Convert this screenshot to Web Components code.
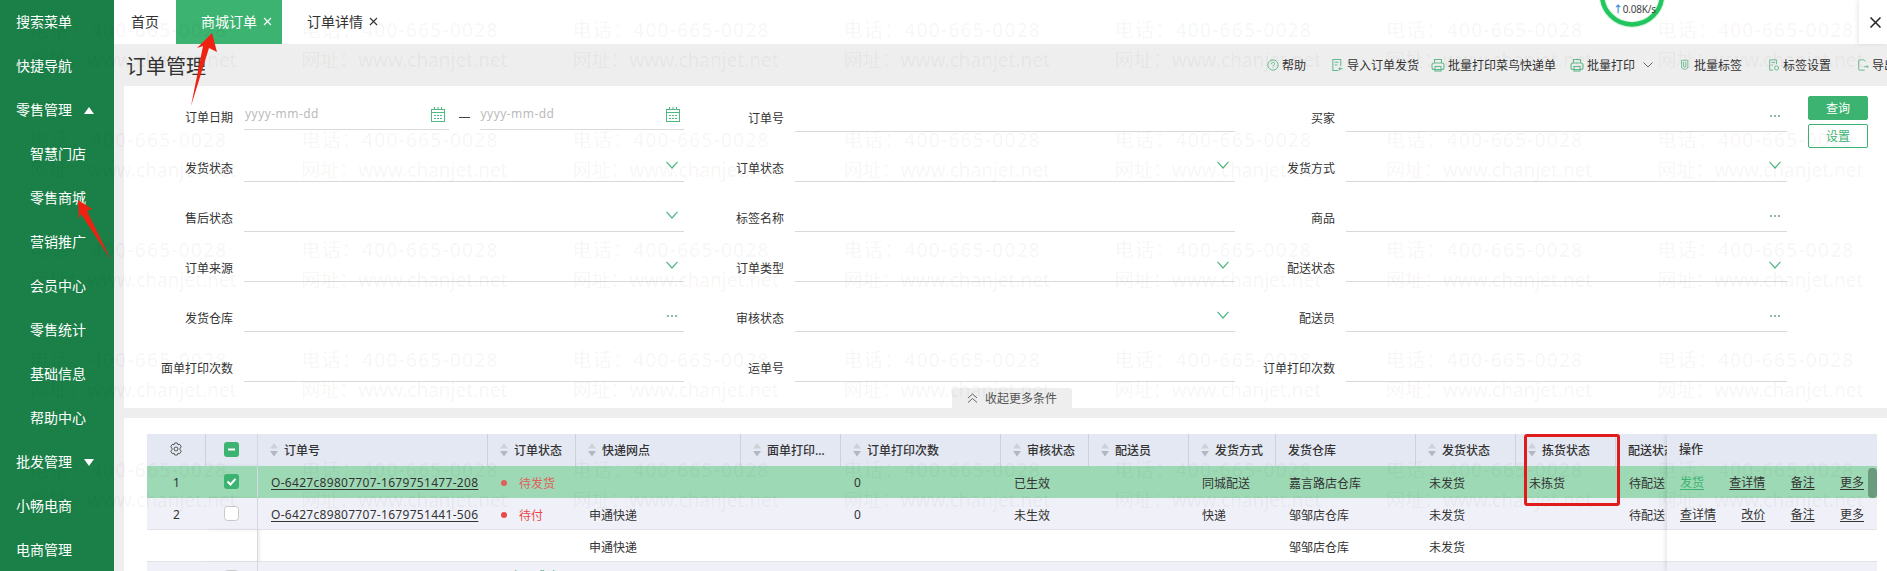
<!DOCTYPE html>
<html lang="zh">
<head>
<meta charset="utf-8">
<title>订单管理</title>
<style>
    html, body { margin: 0; padding: 0; background: #fff; overflow: hidden; }
    body { font-family: "Noto Sans", "Noto Sans CJK SC", sans-serif; font-size: 12px; color: #333; }
</style>
</head>
<body>
<app-shell>
    <app-sidebar></app-sidebar>
    <main-area></main-area>
    <water-mark></water-mark>
    <red-marks></red-marks>
</app-shell>

<script>
const FONT = '"Noto Sans", "Noto Sans CJK SC", sans-serif';

class AppShell extends HTMLElement {
    constructor() {
        super();
        this.attachShadow({ mode: "open" });
    }
    connectedCallback() {
        this.shadowRoot.innerHTML = `
            <style>
                :host {
                    display: grid;
                    grid-template-columns: 114px 1773px;
                    width: 1887px;
                    height: 571px;
                    overflow: hidden;
                    position: relative;
                    font-family: ${FONT};
                }
            </style>
            <slot></slot>
        `;
    }
}

// Menu lateral verde
class SideItem extends HTMLElement {
    constructor() {
        super();
        this.attachShadow({ mode: "open" });
    }
    connectedCallback() {
        const caret = this.getAttribute("caret");
        const tri = caret === "up"
            ? '<path d="M0 8 L5 1 L10 8 Z"/>'
            : '<path d="M0 1 L10 1 L5 8 Z"/>';
        this.shadowRoot.innerHTML = `
            <style>
                :host {
                    display: flex;
                    align-items: center;
                    height: 44px;
                    padding-left: 16px;
                    color: #fff;
                    font-size: 14px;
                    line-height: 44px;
                }
                :host([sub]) { padding-left: 30px; }
                svg { margin-left: 12px; fill: #fff; }
            </style>
            <slot></slot>
            ${caret ? `<svg width="10" height="9" viewBox="0 0 10 9">${tri}</svg>` : ""}
        `;
    }
}

class AppSidebar extends HTMLElement {
    constructor() {
        super();
        this.attachShadow({ mode: "open" });
    }
    connectedCallback() {
        this.shadowRoot.innerHTML = `
            <style>
                :host { display: block; background: #1a8048; height: 571px; overflow: hidden; }
            </style>
            <side-item>搜索菜单</side-item>
            <side-item>快捷导航</side-item>
            <side-item caret="up">零售管理</side-item>
            <side-item sub>智慧门店</side-item>
            <side-item sub>零售商城</side-item>
            <side-item sub>营销推广</side-item>
            <side-item sub>会员中心</side-item>
            <side-item sub>零售统计</side-item>
            <side-item sub>基础信息</side-item>
            <side-item sub>帮助中心</side-item>
            <side-item caret="down">批发管理</side-item>
            <side-item>小畅电商</side-item>
            <side-item>电商管理</side-item>
        `;
    }
}

// Pestanas superiores, con el anillo de velocidad y el boton de cerrar encima
class TabBar extends HTMLElement {
    constructor() {
        super();
        this.attachShadow({ mode: "open" });
    }
    connectedCallback() {
        const x = '<svg class="x" width="9" height="9" viewBox="0 0 9 9"><path d="M1 1 L8 8 M8 1 L1 8"/></svg>';
        this.shadowRoot.innerHTML = `
            <style>
                :host {
                    display: flex;
                    height: 44px;
                    position: relative;
                    background: #fff;
                    font-size: 14px;
                    color: #333;
                }
                .tab { display: flex; align-items: center; padding-left: 25px; height: 44px; box-sizing: border-box; padding-bottom: 3px; }
                .home { width: 62px; padding-left: 17px; }
                .active { width: 106px; background: #3cb371; color: #fff; }
                .x { margin-left: 6px; margin-top: 2px; stroke: currentColor; stroke-width: 1.1; fill: none; }
                .ring { position: absolute; left: 1485px; top: 0; width: 66px; height: 32px; overflow: hidden; }
                .speed { position: absolute; left: 1499px; top: 2px; font-size: 10px; line-height: 14px; color: #444; letter-spacing: -0.2px; white-space: nowrap; }
                .speed b { color: #2f8fe0; font-weight: 700; }
                .close {
                    position: absolute; right: 0; top: 0; width: 28px; height: 44px;
                    background: #fff; box-shadow: -2px 0 4px rgba(0,0,0,.08);
                    display: flex; align-items: center; justify-content: center; color: #222;
                }
                .close svg { stroke: #222; stroke-width: 1.5; fill: none; margin-left: 4px; }
            </style>
            <div class="tab home">首页</div>
            <div class="tab active">商城订单${x}</div>
            <div class="tab">订单详情${x}</div>
            <svg class="ring" viewBox="0 0 66 32">
                <circle cx="33" cy="-5.5" r="30" fill="none" stroke="#dff5e6" stroke-width="7"/>
                <circle cx="33" cy="-5.5" r="30" fill="none" stroke="#22c55e" stroke-width="4.5"/>
            </svg>
            <div class="speed"><b>↑</b>0.08K/s</div>
            <div class="close"><svg width="11" height="11" viewBox="0 0 11 11"><path d="M.5 .5 L10.5 10.5 M10.5 .5 L.5 10.5"/></svg></div>
        `;
    }
}

const TOOL_ICONS = {
    help: '<circle cx="7" cy="7" r="6"/><path d="M5.2 5.6 a1.8 1.8 0 1 1 2.6 1.6 c-.6.3-.8.7-.8 1.3"/><path d="M7 10 v.6"/>',
    imp: '<path d="M10.5 8 V1 H2 V13 H8"/><path d="M4 4 H8 M4 7 H7"/><path d="M12.5 11 H8.5 M10 9.5 L8.5 11 L10 12.5"/>',
    print: '<rect x="1" y="5" width="12" height="6.5" rx="2"/><path d="M3.5 5 V1.5 H10.5 V5"/><rect x="4" y="8.5" width="6" height="4.5"/>',
    label: '<path d="M2 1 H10 V10.5 Q6 14.5 2 10.5 Z"/><path d="M4.5 3 V9 Q6 10.5 7.5 9 V3"/>',
    set: '<path d="M10 6 V1 H2 V13 H6"/><path d="M4 4 H8 M4 7 H6"/><circle cx="10" cy="10.5" r="2.4"/>',
    exp: '<path d="M10 3 L8 1 H3 Q2 1 2 2 V12 Q2 13 3 13 H9"/><path d="M8 9 H13 M11.5 7.5 L13 9 L11.5 10.5"/>'
};

class ToolBtn extends HTMLElement {
    constructor() {
        super();
        this.attachShadow({ mode: "open" });
    }
    connectedCallback() {
        const icon = TOOL_ICONS[this.getAttribute("icon")];
        const size = this.getAttribute("size") || 14;
        const drop = this.hasAttribute("drop")
            ? '<svg class="drop" width="10" height="6" viewBox="0 0 10 6"><path d="M.5 .5 L5 5 L9.5 .5"/></svg>'
            : "";
        this.shadowRoot.innerHTML = `
            <style>
                :host { display: inline-flex; align-items: center; flex-shrink: 0; white-space: nowrap; font-size: 12px; color: #333; }
                .ic { fill: none; stroke: #62b98c; stroke-width: 1.1; margin-right: 3px; }
                .drop { fill: none; stroke: #666; stroke-width: 1; margin-left: 8px; }
            </style>
            <svg class="ic" width="${size}" height="14" viewBox="0 0 14 14" preserveAspectRatio="xMidYMid meet">${icon}</svg><slot></slot>${drop}
        `;
    }
}

class PageHead extends HTMLElement {
    constructor() {
        super();
        this.attachShadow({ mode: "open" });
    }
    connectedCallback() {
        this.shadowRoot.innerHTML = `
            <style>
                :host {
                    display: flex;
                    align-items: center;
                    height: 42px;
                    background: #eee;
                    padding-left: 12px;
                    white-space: nowrap;
                }
                h1 { margin: 0 1060px 0 0; font-size: 20px; font-weight: 400; color: #333; flex-shrink: 0; width: 81px; }
            </style>
            <h1>订单管理</h1>
            <tool-btn icon="help" size="12">帮助</tool-btn>
            <tool-btn icon="imp" size="13" style="margin-left:25px">导入订单发货</tool-btn>
            <tool-btn icon="print" style="margin-left:12px">批量打印菜鸟快递单</tool-btn>
            <tool-btn icon="print" style="margin-left:14px" drop>批量打印</tool-btn>
            <tool-btn icon="label" size="11" style="margin-left:27px">批量标签</tool-btn>
            <tool-btn icon="set" size="12" style="margin-left:26px">标签设置</tool-btn>
            <tool-btn icon="exp" size="12" style="margin-left:26px">导出</tool-btn>
        `;
    }
}

const CAL = `<svg class="cal" width="14" height="15" viewBox="0 0 14 15" fill="none" stroke="#4fb883"><rect x=".5" y="2.5" width="13" height="12"/><path d="M.5 5.5 H13.5 M3.5 0 V3 M7 0 V3 M10.5 0 V3"/><path d="M3 8.5 H5 M6 8.5 H8 M9 8.5 H11 M3 11.5 H5 M6 11.5 H8 M9 11.5 H11"/></svg>`;

// Campo del filtro: etiqueta a la derecha y linea inferior
class FormField extends HTMLElement {
    constructor() {
        super();
        this.attachShadow({ mode: "open" });
    }
    connectedCallback() {
        const kind = this.getAttribute("kind") || "";
        let body = "";
        if (kind === "select") {
            body = '<span class="box line sel"><svg class="end" width="12" height="8" viewBox="0 0 12 8" fill="none" stroke="#4fb883" stroke-width="1.2"><path d="M.5 .8 L6 7 L11.5 .8"/></svg></span>';
        } else if (kind === "dots") {
            body = '<span class="box line more"><svg class="end" width="12" height="4" viewBox="0 0 12 4" fill="#6f9e88"><circle cx="2" cy="2" r="1"/><circle cx="6" cy="2" r="1"/><circle cx="10" cy="2" r="1"/></svg></span>';
        } else if (kind === "date") {
            body = `<span class="range">
                <span class="date line"><em>yyyy-mm-dd</em>${CAL}</span>
                <i></i>
                <span class="date line"><em>yyyy-mm-dd</em>${CAL}</span>
            </span>`;
        } else {
            body = '<span class="box line"></span>';
        }
        this.shadowRoot.innerHTML = `
            <style>
                :host { display: flex; align-items: center; height: 28px; font-size: 12px; color: #333; }
                :host([kind="date"]) label { padding-bottom: 2px; }
                label { width: 100px; margin-right: 11px; text-align: right; flex-shrink: 0; white-space: nowrap; }
                .box { flex: 1; height: 28px; box-sizing: border-box; display: flex; justify-content: flex-end; align-items: flex-start; padding: 0 6px 0 0; }
                .sel { padding-top: 7px; }
                .more { padding-top: 10px; }
                .line { border-bottom: 1px solid #d9d9d9; }
                .range { flex: 1; display: flex; height: 28px; align-items: flex-start; }
                .date { flex: 1; height: 26px; box-sizing: border-box; display: flex; justify-content: space-between; align-items: flex-start; padding-right: 4px; }
                em { font-style: normal; font-size: 12px; color: #bbb; line-height: 20px; letter-spacing: .45px; padding-left: 1px; }
                .cal { margin-top: 3px; }
                i { width: 11px; height: 1px; background: #444; margin: 13px 10px 0 10px; }
            </style>
            <label><slot></slot></label>${body}
        `;
    }
}

class FilterForm extends HTMLElement {
    constructor() {
        super();
        this.attachShadow({ mode: "open" });
    }
    connectedCallback() {
        this.shadowRoot.innerHTML = `
            <style>
                :host {
                    display: flex;
                    height: 322px;
                    margin-left: 10px;
                    background: #fff;
                    padding-left: 9px;
                    position: relative;
                    box-sizing: border-box;
                }
                .grid {
                    display: grid;
                    grid-template-columns: 551px 551px 552px;
                    grid-auto-rows: 28px;
                    row-gap: 22px;
                    padding-top: 18px;
                }
                .btns { margin: 10px 0 0 21px; width: 60px; display: flex; flex-direction: column; gap: 4px; }
                button {
                    height: 24px; width: 60px; padding: 0; box-sizing: border-box; border-radius: 2px;
                    font: 12px ${FONT}; background: #3cb371; color: #fff; border: 1px solid #3cb371;
                }
                button.ghost { background: transparent; color: #3cb371; }
                .fold {
                    position: absolute; left: 828px; bottom: 0; width: 120px; height: 20px;
                    background: #eee; border-radius: 3px 3px 0 0; color: #555; font-size: 12px;
                    display: flex; align-items: center; justify-content: center; gap: 7px;
                }
                .fold svg { fill: none; stroke: #666; }
            </style>
            <div class="grid">
                <form-field kind="date">订单日期</form-field>
                <form-field>订单号</form-field>
                <form-field kind="dots">买家</form-field>
                <form-field kind="select">发货状态</form-field>
                <form-field kind="select">订单状态</form-field>
                <form-field kind="select">发货方式</form-field>
                <form-field kind="select">售后状态</form-field>
                <form-field>标签名称</form-field>
                <form-field kind="dots">商品</form-field>
                <form-field kind="select">订单来源</form-field>
                <form-field kind="select">订单类型</form-field>
                <form-field kind="select">配送状态</form-field>
                <form-field kind="dots">发货仓库</form-field>
                <form-field kind="select">审核状态</form-field>
                <form-field kind="dots">配送员</form-field>
                <form-field>面单打印次数</form-field>
                <form-field>运单号</form-field>
                <form-field>订单打印次数</form-field>
            </div>
            <div class="btns">
                <button>查询</button>
                <button class="ghost">设置</button>
            </div>
            <div class="fold">
                <svg width="11" height="10" viewBox="0 0 11 10"><path d="M1 5 L5.5 1 L10 5 M1 9.5 L5.5 5.5 L10 9.5"/></svg>
                <span>收起更多条件</span>
            </div>
        `;
    }
}

const COLS = [59, 52, 230, 88, 165, 100, 160, 88, 100, 87, 140, 100, 100, 100];
const SORT = '<svg class="sort" width="8" height="14" viewBox="0 0 8 14"><path d="M4 0 L8 5.5 H0 Z" fill="#cdd1d9"/><path d="M0 8 H8 L4 13.5 Z" fill="#b2b7c1"/></svg>';
const GEAR = '<svg width="14" height="14" viewBox="0 0 14 14" fill="none" stroke="#555"><path d="M5.6 1 H8.4 L9 2.8 L10.8 2.4 L12.3 4.8 L11 6.2 V7.8 L12.3 9.2 L10.8 11.6 L9 11.2 L8.4 13 H5.6 L5 11.2 L3.2 11.6 L1.7 9.2 L3 7.8 V6.2 L1.7 4.8 L3.2 2.4 L5 2.8 Z"/><circle cx="7" cy="7" r="2"/></svg>';
const HEADS = [
    ["订单号", 1], ["订单状态", 1], ["快递网点", 1], ["面单打印…", 1], ["订单打印次数", 1],
    ["审核状态", 1], ["配送员", 1], ["发货方式", 1], ["发货仓库", 0], ["发货状态", 1], ["拣货状态", 1], ["配送状态", 0]
];
const ROWS = [
    { no: "O-6427c89807707-1679751477-208", st: "待发货", color: "#e0605c", gap: 12, cour: "", print: "0", audit: "已生效", ship: "同城配送", wh: "嘉言路店仓库", send: "未发货", pick: "未拣货", dist: "待配送", ops: ["发货", "查详情", "备注", "更多"], idx: "1", box: "on", cls: "sel" },
    { no: "O-6427c89807707-1679751441-506", st: "待付", color: "#e8484a", gap: 12, cour: "申通快递", print: "0", audit: "未生效", ship: "快递", wh: "邹邹店仓库", send: "未发货", pick: "", dist: "待配送", ops: ["查详情", "改价", "备注", "更多"], idx: "2", box: "off", cls: "odd" },
    { no: "", st: "", cour: "申通快递", print: "", audit: "", ship: "", wh: "邹邹店仓库", send: "未发货", pick: "", dist: "", ops: [], idx: "", box: "", cls: "" },
    { no: "", st: "交易成功", color: "#2fa564", gap: 3, top: true, cour: "", print: "", audit: "", ship: "", wh: "", send: "", pick: "", dist: "", ops: [], idx: "", box: "off", cls: "odd" }
];

class OrderTable extends HTMLElement {
    constructor() {
        super();
        this.attachShadow({ mode: "open" });
    }
    connectedCallback() {
        const cols = COLS.map(w => `<col style="width:${w}px">`).join("");
        const heads = HEADS.map(h => `<th><span class="h">${h[1] ? SORT : ""}<span>${h[0]}</span></span></th>`).join("");
        const body = ROWS.map(r => `
            <tr class="${r.cls}">
                <td class="c">${r.idx}</td>
                <td class="c fix">${this.box(r.box)}</td>
                <td>${r.no ? `<a>${r.no}</a>` : ""}</td>
                <td class="${r.top ? "top" : ""}">${r.st ? `<span class="st" style="color:${r.color}"><b style="margin-right:${r.gap}px"></b>${r.st}</span>` : ""}</td>
                <td>${r.cour}</td><td></td><td>${r.print}</td><td>${r.audit}</td><td></td><td>${r.ship}</td>
                <td>${r.wh}</td><td>${r.send}</td><td>${r.pick}</td><td>${r.dist}</td>
            </tr>`).join("");
        const ops = ROWS.map(r => `
            <div class="op ${r.cls}">${r.ops.map(o => `<a class="${o === "发货" ? "go" : ""}">${o}</a>`).join("")}</div>`).join("");
        this.shadowRoot.innerHTML = `
            <style>
                :host {
                    display: flex;
                    width: 1730px;
                    height: 137px;
                    overflow: hidden;
                    font-size: 12px;
                    color: #333;
                }
                .pane { width: 1520px; overflow: hidden; flex-shrink: 0; }
                table { border-collapse: separate; border-spacing: 0; table-layout: fixed; width: 1469px; }
                th {
                    height: 32px; padding: 0 0 0 12px; box-sizing: border-box; background: #e4e8f3;
                    font-weight: 500; text-align: left; border-right: 1px solid #cdd1dc; white-space: nowrap; overflow: hidden;
                }
                th.c { padding: 0; text-align: center; }
                th:last-child, td:last-child { border-right: 0; }
                .h { display: flex; align-items: center; gap: 6px; }
                .sort { flex-shrink: 0; }
                td {
                    height: 32px; padding: 2px 0 0 13px; box-sizing: border-box; border-bottom: 1px solid #e2e3e8;
                    white-space: nowrap; overflow: hidden;
                }
                td.c { padding: 2px 0 0; text-align: center; }
                td.top { vertical-align: top; padding-top: 4px; }
                td.c svg, th.c svg { display: block; margin: -2px auto 0; }
                .fix, th.fix { box-shadow: 2px 0 3px rgba(0,0,0,.07); border-right: 1px solid #d5d8e0; }
                tr.odd td { background: #f0f1f8; }
                tr.sel td { background: #9dd9b4; border-bottom-color: #9dd9b4; }
                a { color: #333; text-decoration: underline; text-underline-offset: 2px; letter-spacing: .3px; }
                .st { display: inline-flex; align-items: center; }
                .st b { width: 6px; height: 6px; border-radius: 50%; background: currentColor; }
                .ops {
                    width: 210px; flex-shrink: 0; position: relative; background: #fff;
                    box-shadow: -2px 0 4px rgba(0,0,0,.09);
                }
                .ops .h2 { height: 32px; background: #e4e8f3; padding-left: 12px; font-weight: 500; line-height: 32px; }
                .op {
                    height: 32px; box-sizing: border-box; border-bottom: 1px solid #e2e3e8; padding: 0 13px;
                    display: flex; justify-content: space-between; align-items: center;
                }
                .op a { letter-spacing: 0; }
                .op.odd { background: #f0f1f8; }
                .op.sel { background: #9dd9b4; border-bottom-color: #9dd9b4; }
                a.go { color: #3cb371; }
                .thumb { position: absolute; right: 0; top: 34px; width: 9px; height: 30px; border-radius: 4px; background: #6b9b7f; }
            </style>
            <div class="pane">
                <table>
                    <colgroup>${cols}</colgroup>
                    <thead><tr>
                        <th class="c">${GEAR}</th>
                        <th class="c fix">${this.box("mixed")}</th>
                        ${heads}
                    </tr></thead>
                    <tbody>${body}</tbody>
                </table>
            </div>
            <div class="ops">
                <div class="h2">操作</div>
                ${ops}
                <div class="thumb"></div>
            </div>
        `;
    }

    box(state) {
        if (!state) return "";
        const base = '<svg width="15" height="15" viewBox="0 0 15 15">';
        if (state === "off") return `${base}<rect x=".5" y=".5" width="14" height="14" rx="3" fill="#fff" stroke="#c8c8c8"/></svg>`;
        const mark = state === "on"
            ? '<path d="M3.5 7.5 L6.5 10.5 L11.5 4.8" fill="none" stroke="#fff" stroke-width="2"/>'
            : '<path d="M4 7.5 H11" stroke="#fff" stroke-width="2"/>';
        return `${base}<rect width="15" height="15" rx="3" fill="#3cb371"/>${mark}</svg>`;
    }
}

class MainArea extends HTMLElement {
    constructor() {
        super();
        this.attachShadow({ mode: "open" });
    }
    connectedCallback() {
        this.shadowRoot.innerHTML = `
            <style>
                :host { display: block; background: #eee; height: 571px; overflow: hidden; }
                .list { margin: 10px 0 0 10px; background: #fff; padding: 16px 0 0 23px; height: 153px; box-sizing: border-box; }
            </style>
            <tab-bar></tab-bar>
            <page-head></page-head>
            <filter-form></filter-form>
            <div class="list"><order-table></order-table></div>
        `;
    }
}

// Marca de agua que cubre toda la pagina
class WaterMark extends HTMLElement {
    constructor() {
        super();
        this.attachShadow({ mode: "open" });
    }
    connectedCallback() {
        let cells = "";
        for (let i = 0; i < 35; i++) {
            cells += '<div><p class="tel">电话：400-665-0028</p><p>网址：www.chanjet.net</p></div>';
        }
        this.shadowRoot.innerHTML = `
            <style>
                :host { position: absolute; left: 0; top: 0; width: 1887px; height: 571px; overflow: hidden; pointer-events: none; }
                .w {
                    display: grid;
                    grid-template-columns: repeat(7, 271.2px);
                    grid-auto-rows: 110px;
                    padding: 15px 0 0 30px;
                    color: rgba(0, 0, 0, .055);
                    font-size: 19px;
                    white-space: nowrap;
                }
                p { margin: 0; height: 30px; line-height: 30px; }
                .tel { letter-spacing: 1.3px; }
            </style>
            <div class="w">${cells}</div>
        `;
    }
}

// Anotaciones rojas de la captura
class RedMarks extends HTMLElement {
    constructor() {
        super();
        this.attachShadow({ mode: "open" });
    }
    connectedCallback() {
        this.shadowRoot.innerHTML = `
            <style>
                :host { position: absolute; left: 0; top: 0; width: 1887px; height: 571px; pointer-events: none; }
                svg { position: absolute; left: 0; top: 0; }
                .box { position: absolute; left: 1524px; top: 434px; width: 96px; height: 72px; box-sizing: border-box; border: 3px solid #e01b1b; border-radius: 3px; }
            </style>
            <svg width="1887" height="571">
                <path d="M212 33 L217 52 L209 48 L191 106 L203 46 L197 48 Z" fill="#ee2211"/>
                <path d="M78 200 L92 209 L87 211 L111 260 L81 214 L79 219 Z" fill="#ee2211"/>
            </svg>
            <div class="box"></div>
        `;
    }
}

customElements.define("app-shell", AppShell);
customElements.define("side-item", SideItem);
customElements.define("app-sidebar", AppSidebar);
customElements.define("tab-bar", TabBar);
customElements.define("tool-btn", ToolBtn);
customElements.define("page-head", PageHead);
customElements.define("form-field", FormField);
customElements.define("filter-form", FilterForm);
customElements.define("order-table", OrderTable);
customElements.define("main-area", MainArea);
customElements.define("water-mark", WaterMark);
customElements.define("red-marks", RedMarks);
</script>
</body>
</html>
